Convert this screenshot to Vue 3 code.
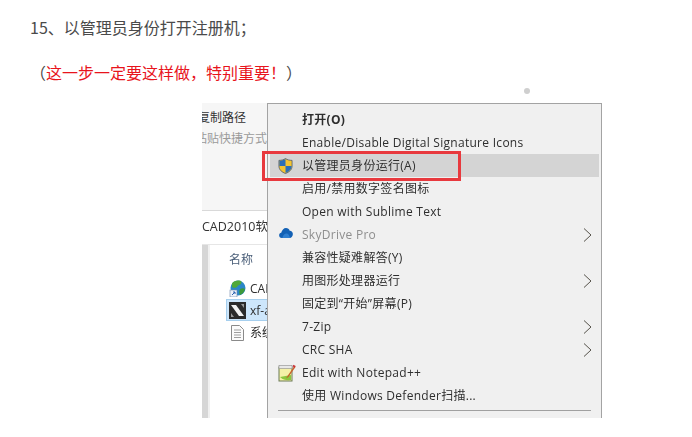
<script setup>
const items = [
  { t: '打开(O)', bold: true },
  { t: 'Enable/Disable Digital Signature Icons' },
  { t: '以管理员身份运行(A)', icon: 'shield', active: true },
  { t: '启用/禁用数字签名图标' },
  { t: 'Open with Sublime Text' },
  { t: 'SkyDrive Pro', icon: 'cloud', arrow: true, muted: true },
  { t: '兼容性疑难解答(Y)' },
  { t: '用图形处理器运行', arrow: true },
  { t: '固定到“开始”屏幕(P)' },
  { t: '7-Zip', arrow: true },
  { t: 'CRC SHA', arrow: true },
  { t: 'Edit with Notepad++', icon: 'notepad' },
  { t: '使用 Windows Defender扫描...' }
]
</script>

<template>
  <div class="page">
    <p class="step">15、以管理员身份打开注册机；</p>
    <p class="note">（<span class="red">这一步一定要这样做，特别重要！</span>）</p>
    <div class="shot">
      <div class="explorer">
        <div class="ribbon">
          <div class="rib-a">复制路径</div>
          <div class="rib-b">粘贴快捷方式</div>
        </div>
        <div class="crumb">CAD2010软</div>
        <div class="files">
          <div class="pane"></div>
          <div class="list">
            <div class="head">名称</div>
            <div class="file">
              <svg width="17" height="17" viewBox="0 0 17 17">
                <circle cx="9" cy="8" r="7.5" fill="#2a86c8" />
                <path d="M3 3.500C5 .5 9 0 12 1c1.500 2-.5 4-3 4.500C8 8 5 8.500 3 7z" fill="#4fa83a" />
                <path d="M11 9c2-1 4-1 5 0-.5 3-2.500 5-5 6-1-2-1-4 0-6z" fill="#3c9a3a" />
                <rect x="1" y="10" width="7" height="7" fill="#eef3fa" stroke="#6d86a8" stroke-width=".6" />
                <path d="M3 15l3-3M4 12h2v2" stroke="#2c62b0" fill="none" />
              </svg>
              <span>CAD2010</span>
            </div>
            <div class="file sel">
              <svg width="17" height="17" viewBox="0 0 17 17">
                <rect width="17" height="17" fill="#2b2b2b" />
                <path d="M2 3h5l8 11h-5z" fill="#f2f2f2" />
                <path d="M12 2h3v4zM2 15v-4l3 4z" fill="#9a9a9a" />
              </svg>
              <span>xf-adsk</span>
            </div>
            <div class="file">
              <svg width="17" height="17" viewBox="0 0 17 17">
                <path d="M2.500 1.500h8l4 4v11h-12z" fill="#fbfbfb" stroke="#8a8a8a" />
                <path d="M5 6h7M5 8.500h7M5 11h7M5 13.500h7" stroke="#9d9d9d" />
              </svg>
              <span>系统</span>
            </div>
          </div>
        </div>
      </div>
      <ul class="menu">
        <li v-for="item in items" :key="item.t" class="row" :class="{ active: item.active, muted: item.muted, bold: item.bold }">
          <svg v-if="item.icon === 'shield'" class="ico" width="15" height="17" viewBox="0 0 16 18">
            <path d="M8 1c2 1.500 4.500 2 7 2v6c0 4-3 6.500-7 8-4-1.500-7-4-7-8V3c2.500 0 5-.5 7-2z" fill="#f4c430" stroke="#44536a" stroke-width=".8" />
            <path d="M8 1.500c-2 1.300-4.500 1.900-6.500 2V9H8zM8 9h6.500c0 3.800-3 6-6.500 7.500z" fill="#2c6fb5" />
          </svg>
          <svg v-else-if="item.icon === 'cloud'" class="ico cloud" width="16" height="11" viewBox="0 0 16 12">
            <path d="M3.500 11.500C1.500 11.500.5 10 .5 8.500c0-1.500 1-2.500 2.300-2.700C3.500 2.800 5.500.5 8 .5c2 0 3.500 1.200 4 3 2-.1 3.500 1.500 3.500 3.700 0 2.500-1.500 4.300-3.500 4.300z" fill="#1361b5" />
            <path d="M4 11.500C4.500 8 7 6 9 6.500c1.500.3 3 2.500 3.500 5z" fill="#2f7fd0" />
          </svg>
          <svg v-else-if="item.icon === 'notepad'" class="ico" width="18" height="18" viewBox="0 0 18 18">
            <rect x="1" y="3" width="13" height="14" fill="#f5f1a8" stroke="#6b7a55" />
            <rect x="1" y="1.500" width="13" height="3" fill="#e8e8e8" stroke="#8c8c8c" stroke-width=".6" />
            <path d="M2 13c3 3 7 3.500 11 3v-5z" fill="#8cc63f" />
            <path d="M17 1L9.500 12l-1.500 2.500 2.500-1.500L17.500 3z" fill="#c8622c" />
            <path d="M15.500 .8l2 1.500-1 1.500-2-1.500z" fill="#c9303a" />
          </svg>
          <span class="label">{{ item.t }}</span>
          <svg v-if="item.arrow" class="arrow" width="9" height="14" viewBox="0 0 9 14">
            <path d="M1 .5L8 7 1 13.500" fill="none" stroke="#55524a" stroke-width="1" />
          </svg>
        </li>
        <li class="sep"></li>
      </ul>
      <div class="dot"></div>
      <div class="mark"></div>
    </div>
  </div>
</template>

<style>
html, body { background: #fff; }
</style>

<style scoped>
.page {
  height: 437px;
  overflow: hidden;
  background: #fff;
  padding-top: 15px;
  box-sizing: border-box;
  font-family: "Noto Sans CJK SC", "Noto Sans", sans-serif;
}
.step, .note {
  margin: 0 0 21px 30px;
  font-size: 16px;
  line-height: 24px;
  color: #4a4a4a;
}
.red { color: #e8141c; }
.shot {
  position: relative;
  width: 400px;
  height: 315px;
  margin: -2px 0 0 202px;
  display: flex;
  filter: blur(.3px);
  font-family: "Open Sans", "Noto Sans CJK SC", sans-serif;
  font-size: 12px;
  color: #2e2e2e;
}
.explorer {
  width: 65px;
  flex: none;
  display: flex;
  flex-direction: column;
  overflow: hidden;
  white-space: nowrap;
}
.ribbon {
  height: 107px;
  background: #f6f6f6;
  border-bottom: 1px solid #d9d9d9;
  overflow: hidden;
}
.rib-a { margin: 6px 0 0 -4px; line-height: 18px; color: #333; }
.rib-b { margin: 3px 0 0 -7px; line-height: 18px; color: #9a9a9a; }
.crumb {
  height: 34px;
  line-height: 32px;
  font-size: 12.5px;
  color: #333;
  border-bottom: 1px solid #e6e6e6;
  box-sizing: border-box;
}
.files { flex: 1; display: flex; }
.pane {
  width: 6px;
  background: #d6d6d6;
  border-right: 2px solid #f0f0f0;
  flex: none;
}
.list { flex: 1; padding: 4px 0 0 16px; min-width: 0; }
.head { height: 28px; line-height: 22px; padding-left: 3px; color: #4c607a; }
.file {
  height: 22px;
  display: flex;
  align-items: center;
  gap: 4px;
  padding-left: 3px;
  box-sizing: border-box;
}
.file svg { flex: none; }
.sel {
  background: #cde6fb;
  border: 1px solid #a6cfee;
  border-right: 0;
  padding-left: 2px;
}
.menu {
  flex: 1;
  margin: 0;
  padding: 4px 2px 0;
  list-style: none;
  background: #f0f0f0;
  border: 1px solid #a3a3a3;
  border-bottom: 0;
  overflow: hidden;
  min-width: 0;
}
.row {
  position: relative;
  height: 23px;
  line-height: 23px;
  padding-left: 32px;
  white-space: nowrap;
  color: #2e2e2e;
}
.active { background: #d4d4d4; }
.muted { color: #8e8e8e; }
.bold { font-weight: 700; }
.label { letter-spacing: .28px; }
.ico {
  position: absolute;
  left: 8px;
  top: 50%;
  transform: translateY(-50%);
}
.cloud { top: 10px; }
.arrow {
  position: absolute;
  right: 7px;
  top: 5px;
}
.sep {
  height: 1px;
  background: #a0a0a0;
  margin: 3px 8px 0 8px;
}
.dot {
  position: absolute;
  left: 322px;
  top: -15px;
  width: 6px;
  height: 6px;
  border-radius: 50%;
  background: #cfcfcf;
}
.mark {
  position: absolute;
  left: 60px;
  top: 48px;
  width: 193px;
  height: 24px;
  border: 3px solid #e8393e;
}
</style>
